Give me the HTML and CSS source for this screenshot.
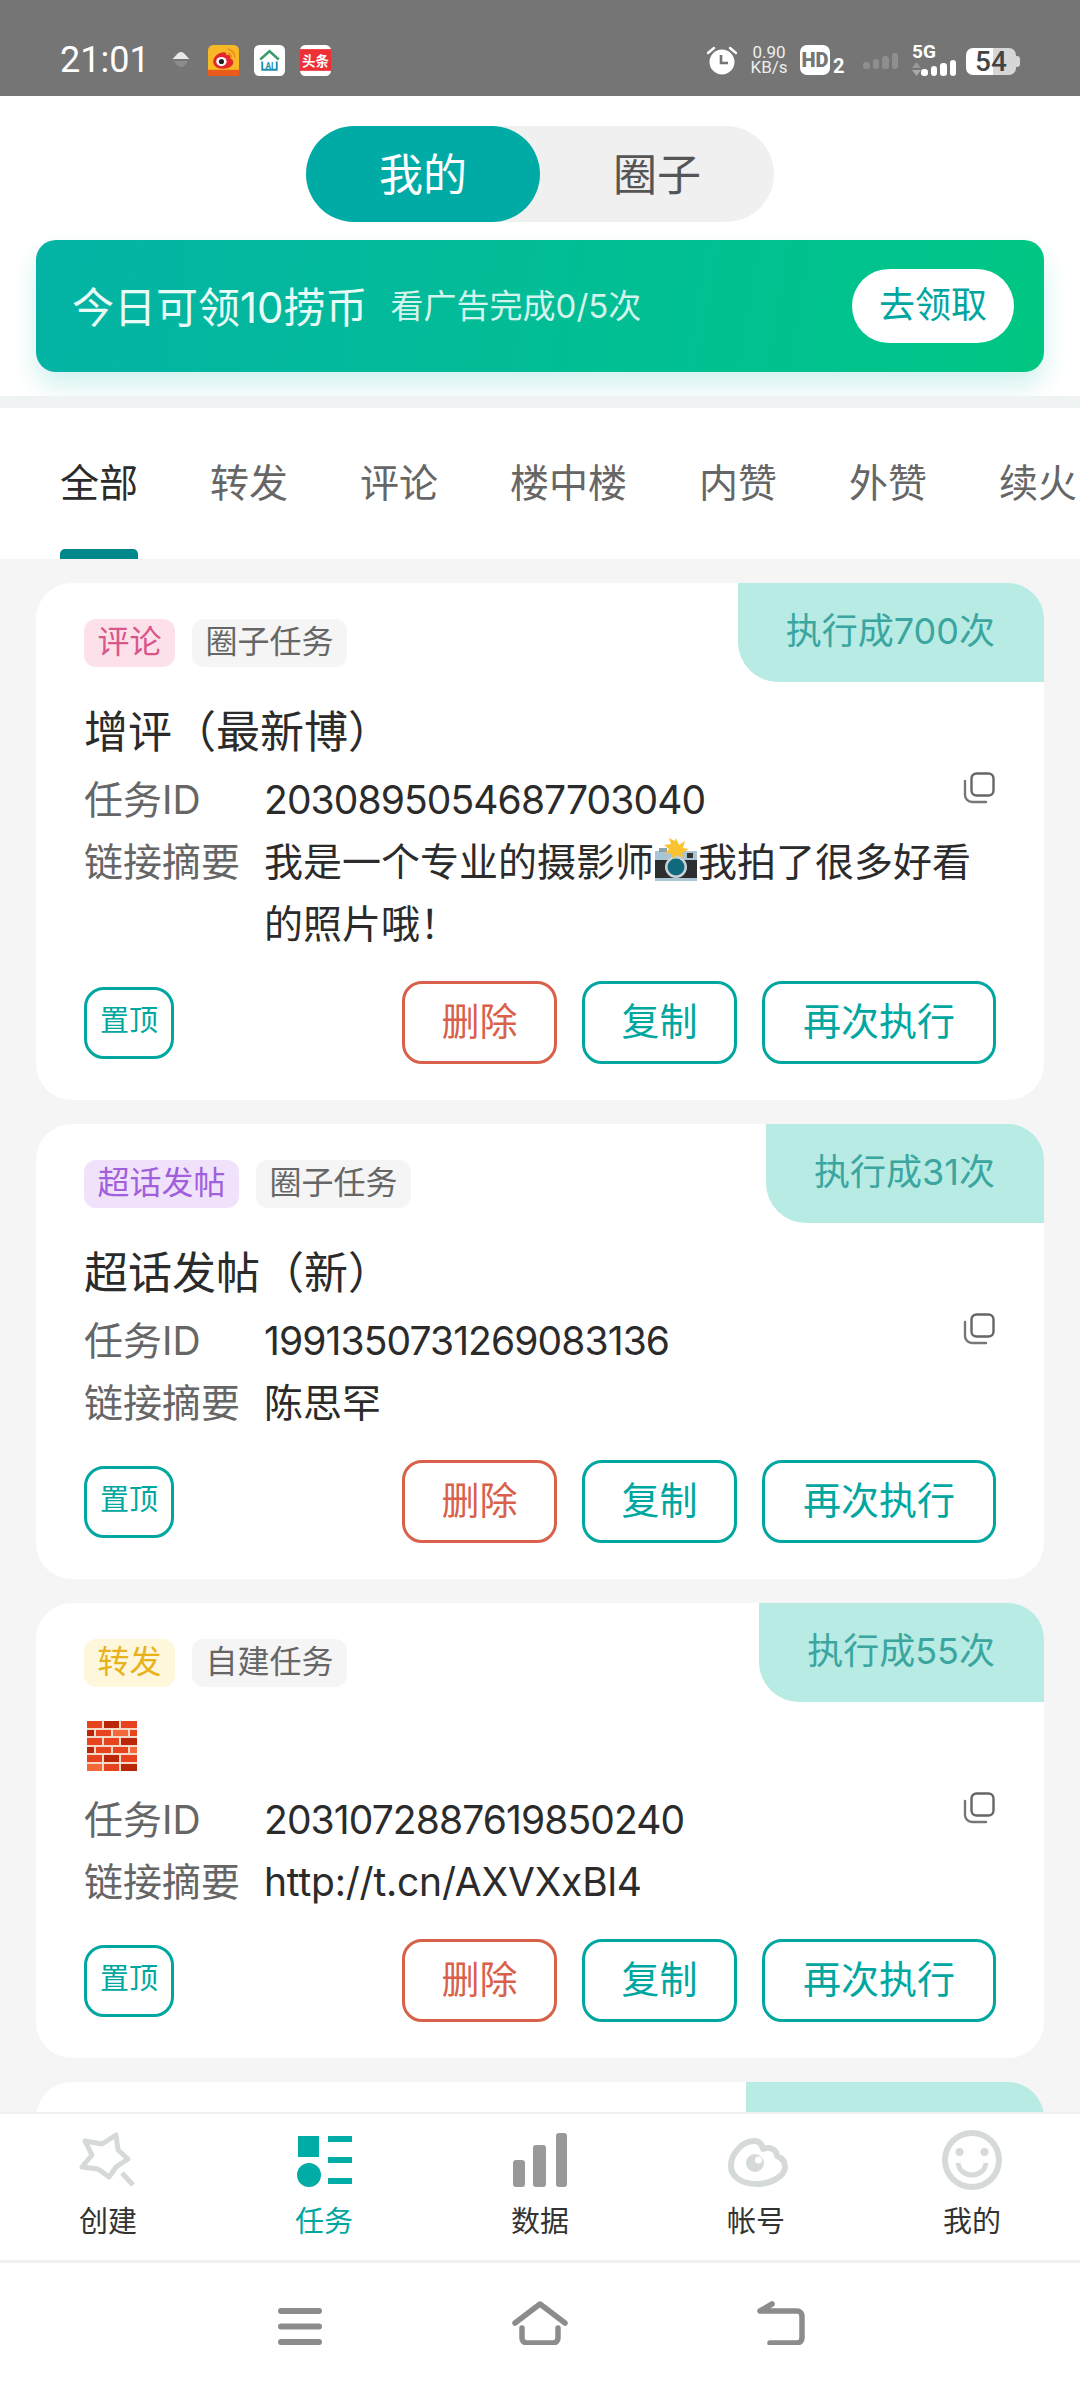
FILE: index.html
```html
<!DOCTYPE html>
<html lang="zh-CN">
<head>
    <meta charset="UTF-8">
    <meta name="viewport" content="width=device-width, initial-scale=1.0">
    <title>任务</title>
    <link rel="stylesheet" href="styles.css">
</head>
<body>
    <svg class="defs" width="0" height="0">
        <symbol id="copy" viewBox="0 0 32 32">
            <rect x="8.500" y="1.500" width="22" height="22" rx="5" fill="none" stroke="#666" stroke-width="2.400"/>
            <path d="M2 9v14a7 7 0 0 0 7 7h14" fill="none" stroke="#777" stroke-width="2.400" stroke-linecap="round"/>
        </symbol>
    </svg>

    <div class="page">
        <!-- status bar -->
        <div class="status">
            <span class="time">21:01</span>
            <svg class="status-cloud" viewBox="0 0 18 18"><path d="M0 8C3 7 5 1 9 1s6 6 9 7z" fill="#e8e8e8"/><path d="M2 10h14c-2 3-4 6-7 6s-5-3-7-6z" fill="#8c8c8c"/></svg>
            <svg class="app" viewBox="0 0 30 30">
                <rect width="30" height="30" rx="5" fill="#f9b826"/>
                <rect y="24" width="30" height="6" fill="#ea5a1c"/>
                <path d="M5 16c0-5 6-9 10-9 3 0 3 2 2.500 3 3-1 5 0 4 3 2 .5 3 2 3 4 0 3-4 6-10 6S5 20 5 16z" fill="#e6262d"/>
                <ellipse cx="13" cy="16" rx="5" ry="4.500" fill="#fff"/>
                <circle cx="13" cy="16" r="2.500" fill="#222"/>
                <path d="M19 4a8 8 0 0 1 7 8M19 8a4 4 0 0 1 3.500 4" fill="none" stroke="#ee8a1e" stroke-width="1.500"/>
            </svg>
            <svg class="app" viewBox="0 0 30 30">
                <rect width="30" height="30" rx="5" fill="#fff"/>
                <path d="M6 14l9-8 9 8" fill="none" stroke="#3b9a6b" stroke-width="2.400"/>
                <path d="M8 16v8h14v-8" fill="none" stroke="#1d8fb0" stroke-width="1.800"/>
                <text x="15" y="23" class="app-ai">AI</text>
            </svg>
            <svg class="app app-last" viewBox="0 0 30 30">
                <rect width="30" height="30" rx="5" fill="#fff"/>
                <rect y="4" width="30" height="21" fill="#ef2f36"/>
                <text x="15" y="20" class="app-tt">头条</text>
            </svg>

            <div class="status-right">
                <svg class="alarm" viewBox="0 0 30 30">
                    <circle cx="15" cy="17" r="12.500" fill="#fff"/>
                    <path d="M14 10v8h7" fill="none" stroke="#757575" stroke-width="2.600"/>
                    <path d="M1 8l6-5M29 8l-6-5" stroke="#fff" stroke-width="2.400" stroke-linecap="round"/>
                </svg>
                <div class="speed"><span>0.90</span><span>KB/s</span></div>
                <span class="hd">HD</span>
                <span class="hd-num">2</span>
                <div class="signal signal-dim"><i class="s1"></i><i class="s2"></i><i class="s3"></i><i class="s4"></i></div>
                <div class="fiveg">
                    <span class="fiveg-label">5G</span>
                    <svg class="fiveg-arrows" viewBox="0 0 9 14"><path d="M4.500 0L9 6H0z" fill="#999"/><path d="M4.500 14L9 8H0z" fill="#aaa"/></svg>
                    <div class="signal"><i class="s1"></i><i class="s2"></i><i class="s3"></i><i class="s4"></i></div>
                </div>
                <div class="battery"><span>54</span></div>
            </div>
        </div>

        <!-- header -->
        <div class="top">
            <div class="toggle">
                <div class="toggle-item active">我的</div>
                <div class="toggle-item">圈子</div>
            </div>
            <div class="banner">
                <span class="banner-title">今日可领10捞币</span>
                <span class="banner-sub">看广告完成0/5次</span>
                <span class="banner-btn">去领取</span>
            </div>
        </div>
        <div class="strip"></div>

        <div class="tabs">
            <span class="tab active">全部</span>
            <span class="tab">转发</span>
            <span class="tab">评论</span>
            <span class="tab">楼中楼</span>
            <span class="tab">内赞</span>
            <span class="tab">外赞</span>
            <span class="tab">续火</span>
        </div>

        <!-- task list -->
        <div class="list">
            <div class="card">
                <div class="badge">执行成700次</div>
                <div class="tags"><span class="tag tag-pink">评论</span><span class="tag">圈子任务</span></div>
                <div class="title">增评（最新博）</div>
                <div class="row">
                    <span class="label">任务ID</span><span class="value num">2030895054687703040</span>
                    <svg class="copy"><use href="#copy"/></svg>
                </div>
                <div class="row">
                    <span class="label">链接摘要</span>
                    <span class="value">我是一个专业的摄影师<svg class="emoji" viewBox="0 0 44 44">
                        <rect x="1" y="13" width="42" height="29" rx="2" fill="#2b2d2f"/>
                        <rect x="1" y="13" width="42" height="9" fill="#a9c4d2"/>
                        <rect x="1" y="40" width="42" height="3" fill="#a9c4d2"/>
                        <rect x="5" y="10" width="8" height="4" fill="#8da3ad"/>
                        <rect x="33" y="15" width="6" height="5" fill="#333"/>
                        <circle cx="22" cy="29" r="11" fill="#c8d2d6"/>
                        <circle cx="22" cy="29" r="8.500" fill="#11697d"/>
                        <path d="M22 0l3 7 6-4-2 7 6 1-7 4 2 5-7-3-4 4-2-6-6 1 4-5-5-4 7-1-2-6 6 3z" fill="#f9c22e"/>
                    </svg>我拍了很多好看的照片哦！</span>
                </div>
                <div class="actions">
                    <span class="pin">置顶</span>
                    <span class="btn btn-red">删除</span>
                    <span class="btn">复制</span>
                    <span class="btn btn-wide">再次执行</span>
                </div>
            </div>

            <div class="card">
                <div class="badge">执行成31次</div>
                <div class="tags"><span class="tag tag-purple">超话发帖</span><span class="tag">圈子任务</span></div>
                <div class="title">超话发帖（新）</div>
                <div class="row">
                    <span class="label">任务ID</span><span class="value num">1991350731269083136</span>
                    <svg class="copy"><use href="#copy"/></svg>
                </div>
                <div class="row">
                    <span class="label">链接摘要</span><span class="value">陈思罕</span>
                </div>
                <div class="actions">
                    <span class="pin">置顶</span>
                    <span class="btn btn-red">删除</span>
                    <span class="btn">复制</span>
                    <span class="btn btn-wide">再次执行</span>
                </div>
            </div>

            <div class="card">
                <div class="badge">执行成55次</div>
                <div class="tags"><span class="tag tag-yellow">转发</span><span class="tag">自建任务</span></div>
                <div class="title">
                    <svg class="brick" viewBox="0 0 50 50">
                        <rect width="50" height="50" fill="#f4d9c8"/>
                        <g fill="#e8431f">
                            <rect width="15" height="7"/><rect x="34" width="16" height="7"/>
                            <rect x="9" y="9" width="15" height="6"/><rect x="43" y="9" width="7" height="6"/>
                            <rect y="17" width="15" height="7"/><rect x="17" y="17" width="15" height="7"/>
                            <rect x="26" y="26" width="15" height="6"/><rect y="34" width="15" height="7"/>
                            <rect x="34" y="34" width="16" height="7"/><rect x="9" y="26" width="15" height="6"/>
                            <rect x="17" y="43" width="15" height="7"/>
                        </g>
                        <g fill="#bb2508">
                            <rect x="17" width="15" height="7"/><rect y="9" width="7" height="6"/>
                            <rect x="34" y="17" width="16" height="7"/><rect x="17" y="34" width="15" height="7"/>
                            <rect x="34" y="43" width="16" height="7"/><rect y="26" width="7" height="6"/>
                        </g>
                        <g fill="#f4683a">
                            <rect x="26" y="9" width="15" height="6"/><rect x="43" y="26" width="7" height="6"/>
                            <rect y="43" width="15" height="7"/>
                        </g>
                    </svg>
                </div>
                <div class="row">
                    <span class="label">任务ID</span><span class="value num">2031072887619850240</span>
                    <svg class="copy"><use href="#copy"/></svg>
                </div>
                <div class="row">
                    <span class="label">链接摘要</span><span class="value url">http://t.cn/AXVXxBl4</span>
                </div>
                <div class="actions">
                    <span class="pin">置顶</span>
                    <span class="btn btn-red">删除</span>
                    <span class="btn">复制</span>
                    <span class="btn btn-wide">再次执行</span>
                </div>
            </div>

            <div class="card card-cut"><div class="badge badge-cut"></div></div>
        </div>

        <!-- bottom nav -->
        <div class="nav">
            <div class="nav-item">
                <svg class="nav-icon" viewBox="0 0 64 60">
                    <path d="M9 11L26 14L40 5L42 20L52 29L40 37L33 47L22 39L6 37L16 25Z" fill="none" stroke="#d5dad9" stroke-width="5" stroke-linejoin="round"/>
                    <path d="M46 43l11 12" stroke="#d5dad9" stroke-width="5"/>
                </svg>
                <span>创建</span>
            </div>
            <div class="nav-item active">
                <svg class="nav-icon" viewBox="0 0 64 60">
                    <rect x="6" y="6" width="21" height="21" fill="#00aca6"/>
                    <circle cx="17" cy="45" r="12" fill="#00aca6"/>
                    <rect x="36" y="6" width="24" height="6" fill="#00aca6"/>
                    <rect x="36" y="27" width="24" height="6" fill="#00aca6"/>
                    <rect x="36" y="48" width="24" height="6" fill="#00aca6"/>
                </svg>
                <span>任务</span>
            </div>
            <div class="nav-item">
                <svg class="nav-icon" viewBox="0 0 64 60">
                    <rect x="5" y="30" width="12" height="27" rx="3" fill="#999"/>
                    <rect x="25" y="15" width="13" height="42" rx="3" fill="#999"/>
                    <rect x="48" y="3" width="11" height="54" rx="3" fill="#999"/>
                </svg>
                <span>数据</span>
            </div>
            <div class="nav-item">
                <svg class="nav-icon" viewBox="0 0 64 60">
                    <path d="M7 36C7 22 20 11 30 11C35 11 38 14 39 19C45 17 52 18 53 26C58 28 61 32 61 37C61 46 47 54 33 54C18 54 7 47 7 36Z" fill="none" stroke="#d5dad9" stroke-width="6" stroke-linejoin="round"/>
                    <circle cx="31" cy="33" r="9" fill="#d5dad9"/>
                    <circle cx="34.500" cy="30" r="3.500" fill="#fff"/>
                </svg>
                <span>帐号</span>
            </div>
            <div class="nav-item">
                <svg class="nav-icon" viewBox="0 0 64 60">
                    <circle cx="32" cy="30" r="27" fill="none" stroke="#d5dad9" stroke-width="6"/>
                    <circle cx="19.500" cy="22" r="4" fill="#d5dad9"/>
                    <circle cx="44.500" cy="22" r="4" fill="#d5dad9"/>
                    <path d="M18 33c2 16 26 16 28 0" fill="none" stroke="#d5dad9" stroke-width="5"/>
                </svg>
                <span>我的</span>
            </div>
        </div>

        <!-- system gesture bar -->
        <div class="sysbar">
            <svg class="sys-menu" viewBox="0 0 44 37"><path d="M3 3h38M3 18.500h38M3 34h38" stroke="#8c8c8c" stroke-width="6" stroke-linecap="round"/></svg>
            <svg class="sys-home" viewBox="0 0 56 44"><path d="M3 22L28 3l25 19" fill="none" stroke="#8c8c8c" stroke-width="5.500" stroke-linecap="round" stroke-linejoin="round"/><path d="M10 27v10a5 5 0 0 0 5 5h26a5 5 0 0 0 5-5V27" fill="none" stroke="#8c8c8c" stroke-width="5.500" stroke-linecap="round"/></svg>
            <svg class="sys-back" viewBox="0 0 48 44"><path d="M15 3L3 10h37a5 5 0 0 1 5 5v22a5 5 0 0 1-5 5H13" fill="none" stroke="#8c8c8c" stroke-width="5.500" stroke-linecap="round" stroke-linejoin="round"/></svg>
        </div>
    </div>
</body>
</html>
```

FILE: styles.css
```css
* {
    box-sizing: border-box;
}

body {
    margin: 0;
    font-family: "Inter", "Noto Sans CJK SC", sans-serif;
    background-color: #fff;
    text-spacing-trim: space-all;
}

.defs {
    position: absolute;
}

.page {
    width: 1080px;
    height: 2388px;
    display: flex;
    flex-direction: column;
    overflow: hidden;
}

/* status bar */
.status {
    height: 96px;
    flex: none;
    background-color: #757575;
    display: flex;
    align-items: center;
    padding: 24px 60px 0;
    color: #fff;
}

.time {
    font-family: "Roboto", sans-serif;
    font-size: 36px;
    width: 112px;
}

.status-cloud {
    width: 18px;
    height: 18px;
    margin-right: 18px;
}

.app {
    width: 31px;
    height: 31px;
    margin-right: 15px;
}

.app-ai {
    font: bold 8px "Roboto", sans-serif;
    fill: #1d8fb0;
    text-anchor: middle;
}

.app-tt {
    font: bold 13px "Noto Sans CJK SC", sans-serif;
    fill: #fff;
    text-anchor: middle;
}

.status-right {
    margin-left: auto;
    display: flex;
    align-items: center;
}

.alarm {
    width: 30px;
    height: 30px;
    margin-right: 13px;
}

.speed {
    display: flex;
    flex-direction: column;
    align-items: center;
    width: 38px;
    font-family: "Roboto", sans-serif;
    font-size: 17px;
    line-height: 15px;
    margin-right: 12px;
    color: #eee;
}

.hd {
    width: 30px;
    height: 30px;
    border-radius: 7px;
    background-color: #fff;
    color: #757575;
    font: 900 20px/30px "Roboto", sans-serif;
    text-align: center;
}

.hd-num {
    font: bold 20px/18px "Roboto", sans-serif;
    width: 14px;
    margin: 12px 16px 0 3px;
}

.signal {
    display: flex;
    align-items: flex-end;
    gap: 3px;
    height: 17px;
}

.signal i {
    width: 6.500px;
    background-color: #fff;
    border-radius: 3px;
}

.signal .s1 { height: 7px; }
.signal .s2 { height: 10px; }
.signal .s3 { height: 13px; }
.signal .s4 { height: 16px; }

.signal-dim i {
    background-color: #8f8f8f;
}

.fiveg {
    display: grid;
    grid-template-columns: 9px auto;
    margin: 0 10px 0 14px;
}

.fiveg-label {
    grid-column: 1 / 3;
    font: bold 19px/14px "Roboto", sans-serif;
}

.fiveg-arrows {
    width: 9px;
    height: 14px;
    align-self: end;
}

.battery {
    position: relative;
    width: 50px;
    height: 27px;
    border-radius: 7px;
    margin: 3px 4px 0 0;
    background: linear-gradient(90deg, #fff 0 54%, #d6d6d6 54% 100%);
    color: #444;
    font: 500 28px/27px "Roboto", sans-serif;
    text-align: center;
}

.battery::after {
    content: "";
    position: absolute;
    left: 50px;
    top: 8px;
    width: 4px;
    height: 11px;
    border-radius: 0 3px 3px 0;
    background-color: #d6d6d6;
}

/* header */
.top {
    height: 300px;
    flex: none;
    padding: 30px 36px 0;
    background-color: #fff;
}

.toggle {
    width: 468px;
    height: 96px;
    margin: 0 auto 18px;
    border-radius: 48px;
    background-color: #f0f0f0;
    display: flex;
    font-size: 44px;
    color: #555;
}

.toggle-item {
    width: 234px;
    line-height: 92px;
    text-align: center;
    font-family: "Noto Sans CJK SC", sans-serif;
}

.toggle-item.active {
    background-color: #00aba6;
    color: #fff;
    border-radius: 48px;
}

.banner {
    height: 132px;
    border-radius: 20px;
    padding: 0 30px 0 36px;
    display: flex;
    align-items: center;
    color: #e8fbf6;
    background: linear-gradient(100deg, #04b3a5, #00c58a 90%, #00c680);
    box-shadow: 0 14px 26px rgba(0, 180, 170, 0.18);
}

.banner-title {
    font-size: 42px;
    margin: 0 23px 4px 0;
}

.banner-sub {
    font-size: 33px;
    margin-bottom: 4px;
    opacity: 0.9;
}

.banner-btn {
    margin-left: auto;
    width: 162px;
    height: 74px;
    border-radius: 37px;
    background-color: #fff;
    color: #00a5a0;
    font-size: 36px;
    line-height: 72px;
    text-align: center;
}

.strip {
    height: 12px;
    flex: none;
    background-color: #f0f3f3;
}

/* tabs */
.tabs {
    height: 151px;
    flex: none;
    display: flex;
    gap: 72px;
    padding: 48px 0 0 60px;
    background-color: #fff;
    font-size: 39px;
    color: #666;
    white-space: nowrap;
    overflow: hidden;
}

.tab {
    position: relative;
    height: 54px;
    line-height: 54px;
}

.tab.active {
    color: #2b2b2b;
}

.tab.active::after {
    content: "";
    position: absolute;
    left: 0;
    right: 0;
    top: 93px;
    height: 10px;
    border-radius: 5px 5px 0 0;
    background-color: #00878a;
}

/* task cards */
.list {
    flex: 1;
    min-height: 0;
    overflow: hidden;
    background-color: #f5f5f5;
    padding: 24px 36px 0;
    display: flex;
    flex-direction: column;
    gap: 24px;
}

.card {
    flex: none;
    position: relative;
    background-color: #fff;
    border-radius: 36px;
    padding: 36px 48px;
}

.card-cut {
    height: 200px;
}

.badge {
    position: absolute;
    top: 0;
    right: 0;
    height: 99px;
    padding: 0 49px 0 48px;
    border-radius: 0 36px 0 40px;
    background-color: #b8ebe4;
    color: #3ba6a0;
    font-size: 36px;
    line-height: 96px;
}

.badge-cut {
    width: 298px;
}

.tags {
    display: flex;
    gap: 17px;
}

.tag {
    height: 48px;
    padding: 0 13.500px;
    border-radius: 12px;
    background-color: #f5f5f5;
    color: #666;
    font-size: 32px;
    line-height: 46px;
}

.tag-pink {
    background-color: #fde1ea;
    color: #d9568c;
}

.tag-purple {
    background-color: #f0e2fb;
    color: #a15fdc;
}

.tag-yellow {
    background-color: #fef7dc;
    color: #e8b21c;
}

.title {
    height: 68px;
    margin: 34px 0 0;
    font-size: 44px;
    line-height: 62px;
    color: #2b2b2b;
}

.brick {
    width: 50px;
    height: 50px;
    margin: 7px 0 0 3px;
    display: block;
}

.row {
    display: flex;
    font-size: 39px;
    line-height: 62px;
    color: #2b2b2b;
}

.label {
    width: 180px;
    flex: none;
    color: #666;
}

.value {
    flex: 1;
}

.num {
    letter-spacing: -0.900px;
}

.url {
    letter-spacing: -0.200px;
}

.copy {
    width: 32px;
    height: 32px;
    flex: none;
    margin: 3px 1px 0 0;
}

.emoji {
    width: 44px;
    height: 44px;
    vertical-align: -6px;
}

.actions {
    display: flex;
    align-items: center;
    gap: 25px;
    margin-top: 26px;
}

.pin {
    width: 90px;
    height: 72px;
    margin-right: auto;
    border: 3px solid #00a7a0;
    border-radius: 20px;
    color: #00a7a0;
    font-size: 29px;
    line-height: 62px;
    text-align: center;
}

.btn {
    width: 155px;
    height: 83px;
    border: 3px solid #00a7a0;
    border-radius: 20px;
    color: #00a7a0;
    font-size: 38px;
    line-height: 74px;
    text-align: center;
}

.btn-red {
    border-color: #d9604a;
    color: #d9604a;
}

.btn-wide {
    width: 234px;
}

/* bottom nav */
.nav {
    height: 151px;
    flex: none;
    background-color: #fff;
    border-top: 2px solid #f0f0f0;
    border-bottom: 3px solid #f0f0f0;
    display: flex;
    padding: 16px 0 0;
}

.nav-item {
    flex: 1;
    display: flex;
    flex-direction: column;
    align-items: center;
    font-size: 29px;
    color: #333;
}

.nav-item.active {
    color: #00a7a0;
}

.nav-icon {
    width: 64px;
    height: 60px;
    margin-bottom: 8px;
}

/* system bar */
.sysbar {
    height: 125px;
    flex: none;
    background-color: #fff;
    display: flex;
    padding: 38px 0 0 278px;
}

.sys-menu {
    width: 44px;
    height: 37px;
    margin: 7px 190px 0 0;
}

.sys-home {
    width: 56px;
    height: 44px;
    margin-right: 189px;
}

.sys-back {
    width: 48px;
    height: 44px;
}
```
